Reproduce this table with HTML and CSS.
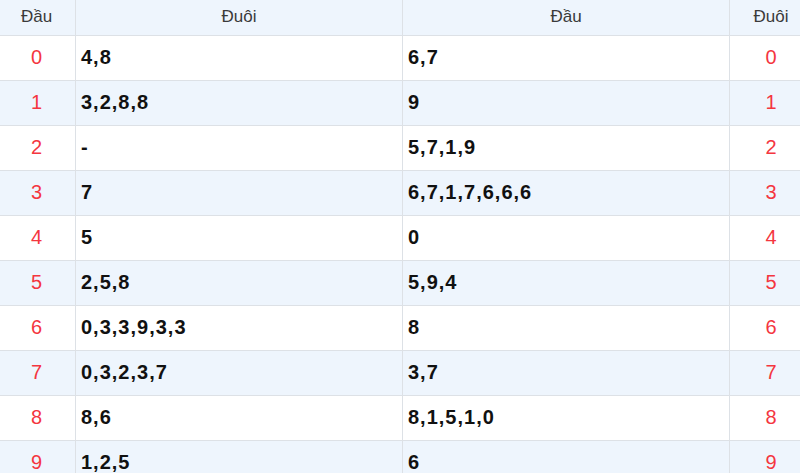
FILE: index.html
```html
<!DOCTYPE html>
<html>
<head>
<meta charset="utf-8">
<link rel="stylesheet" href="styles.css">
</head>
<body>
<table class="lt">
  <colgroup>
    <col class="c-num"><col class="c-val"><col class="c-val"><col class="c-num2">
  </colgroup>
  <thead>
    <tr><th>Đầu</th><th>Đuôi</th><th>Đầu</th><th>Đuôi</th></tr>
  </thead>
  <tbody>
    <tr><td class="n">0</td><td class="v">4,8</td><td class="v">6,7</td><td class="n">0</td></tr>
    <tr class="alt"><td class="n">1</td><td class="v">3,2,8,8</td><td class="v">9</td><td class="n">1</td></tr>
    <tr><td class="n">2</td><td class="v">-</td><td class="v">5,7,1,9</td><td class="n">2</td></tr>
    <tr class="alt"><td class="n">3</td><td class="v">7</td><td class="v">6,7,1,7,6,6,6</td><td class="n">3</td></tr>
    <tr><td class="n">4</td><td class="v">5</td><td class="v">0</td><td class="n">4</td></tr>
    <tr class="alt"><td class="n">5</td><td class="v">2,5,8</td><td class="v">5,9,4</td><td class="n">5</td></tr>
    <tr><td class="n">6</td><td class="v">0,3,3,9,3,3</td><td class="v">8</td><td class="n">6</td></tr>
    <tr class="alt"><td class="n">7</td><td class="v">0,3,2,3,7</td><td class="v">3,7</td><td class="n">7</td></tr>
    <tr><td class="n">8</td><td class="v">8,6</td><td class="v">8,1,5,1,0</td><td class="n">8</td></tr>
    <tr class="alt"><td class="n">9</td><td class="v">1,2,5</td><td class="v">6</td><td class="n">9</td></tr>
  </tbody>
</table>
</body>
</html>
```
FILE: styles.css
```css
html, body { margin: 0; padding: 0; background: #fff; }
body { font-family: "Liberation Sans", Arial, sans-serif; overflow: hidden; }
.lt {
  width: 815px;
  border-collapse: collapse;
  table-layout: fixed;
  margin-left: -3px;
}
.c-num { width: 78px; }
.c-val { width: 327px; }
.c-num2 { width: 83px; }
.lt th, .lt td { border: 1px solid #dde1e6; padding: 0; }
.lt thead tr { height: 35px; background: #eef5fd; }
.lt th { font-weight: normal; font-size: 17px; color: #3a3a3a; text-align: center; border-top: none; }
.lt tbody tr { height: 45px; background: #fff; }
.lt tbody tr.alt { background: #eef5fd; }
.lt td.n { text-align: center; color: #f4363f; font-size: 20px; }
.lt td.v { text-align: left; padding-left: 5px; font-weight: bold; font-size: 20px; color: #111; letter-spacing: 1px; }
```
